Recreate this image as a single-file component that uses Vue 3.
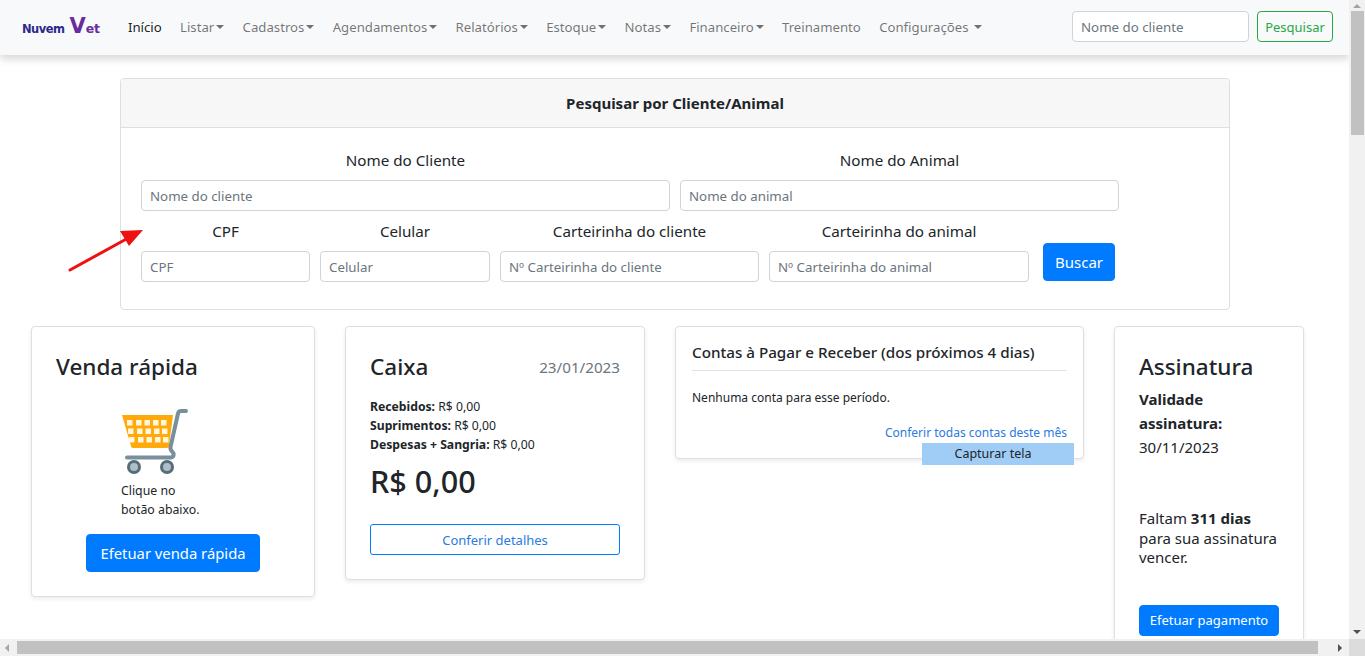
<script setup>
const navItems = [
  { label: 'Início', active: true },
  { label: 'Listar', caret: true },
  { label: 'Cadastros', caret: true },
  { label: 'Agendamentos', caret: true },
  { label: 'Relatórios', caret: true },
  { label: 'Estoque', caret: true },
  { label: 'Notas', caret: true },
  { label: 'Financeiro', caret: true },
  { label: 'Treinamento' },
  { label: 'Configurações', caret: true, spaced: true }
]

const lowerFields = [
  { label: 'CPF', placeholder: 'CPF', cls: 'w-cpf' },
  { label: 'Celular', placeholder: 'Celular', cls: 'w-cel' },
  { label: 'Carteirinha do cliente', placeholder: 'Nº Carteirinha do cliente', cls: 'w-cli' },
  { label: 'Carteirinha do animal', placeholder: 'Nº Carteirinha do animal', cls: 'w-ani' }
]

// white windows of the cart basket
const cartCols = [6, 15, 23.5, 32, 40]
const cartRows = [13, 21.5, 30]
</script>

<template>
  <div class="shell">
    <div class="middle">
      <div class="viewport">
        <nav class="navbar">
          <a class="brand"><span class="b1">Nuvem</span><span class="b2"><span class="bv">V</span>et</span></a>
          <ul class="nav">
            <li v-for="item in navItems" :key="item.label" :class="{ active: item.active }">
              {{ item.label }}<span v-if="item.spaced">&nbsp;</span><i v-if="item.caret" class="caret"></i>
            </li>
          </ul>
          <form class="nav-search" @submit.prevent>
            <input class="form-control nav-input" placeholder="Nome do cliente">
            <button class="btn-search" type="button">Pesquisar</button>
          </form>
        </nav>

        <section class="search-card">
          <header class="search-head">Pesquisar por Cliente/Animal</header>
          <div class="search-body">
            <div class="form-row">
              <div class="field w-nome">
                <label>Nome do Cliente</label>
                <input class="form-control" placeholder="Nome do cliente">
              </div>
              <div class="field w-animal">
                <label>Nome do Animal</label>
                <input class="form-control" placeholder="Nome do animal">
              </div>
            </div>
            <div class="form-row lower">
              <div v-for="f in lowerFields" :key="f.label" class="field" :class="f.cls">
                <label>{{ f.label }}</label>
                <input class="form-control" :placeholder="f.placeholder">
              </div>
              <button class="btn-primary buscar" type="button">Buscar</button>
            </div>
          </div>
        </section>

        <div class="cards">
          <div class="card venda">
            <h3>Venda rápida</h3>
            <div class="venda-center">
              <svg class="cart" width="68" height="68" viewBox="0 0 68 68">
                <path d="M1 8h51l-4 31c0 1-1 2-2 2H12c-1 0-2-1-2-2z" fill="#ffa90a" />
                <g fill="#fff6dc">
                  <template v-for="(y, r) in cartRows" :key="r">
                    <rect v-for="x in cartCols" :key="x" :x="x + r" :y="y" width="5.500" height="5.500" />
                  </template>
                </g>
                <path d="M65 4h-5c-1.500 0-2.500.5-3 2.500L49.500 40c-.5 2 .5 3.500 2 5 1.500 1.500 2 4.500-1.500 5.500H6" fill="none" stroke="#78909c" stroke-width="4" stroke-linecap="round" stroke-linejoin="round" />
                <circle cx="13" cy="60" r="5.500" fill="#b0bec5" stroke="#546e7a" stroke-width="3" />
                <circle cx="46" cy="60" r="5.500" fill="#b0bec5" stroke="#546e7a" stroke-width="3" />
              </svg>
              <p class="venda-text">Clique no<br>botão abaixo.</p>
              <button class="btn-primary venda-btn" type="button">Efetuar venda rápida</button>
            </div>
          </div>

          <div class="card caixa">
            <div class="caixa-top">
              <h3>Caixa</h3>
              <span class="caixa-date">23/01/2023</span>
            </div>
            <div class="caixa-lines">
              <div><b>Recebidos:</b> R$ 0,00</div>
              <div><b>Suprimentos:</b> R$ 0,00</div>
              <div><b>Despesas + Sangria:</b> R$ 0,00</div>
            </div>
            <div class="caixa-total">R$ 0,00</div>
            <button class="btn-outline" type="button">Conferir detalhes</button>
          </div>

          <div class="card contas">
            <h5>Contas à Pagar e Receber (dos próximos 4 dias)</h5>
            <p>Nenhuma conta para esse período.</p>
            <a class="contas-link">Conferir todas contas deste mês</a>
          </div>

          <div class="card assinatura">
            <h3>Assinatura</h3>
            <div class="validade"><b>Validade assinatura:</b><br>30/11/2023</div>
            <div class="faltam">Faltam <b>311 dias</b> para sua assinatura vencer.</div>
            <button class="btn-primary pagar" type="button">Efetuar pagamento</button>
          </div>
        </div>

        <svg class="arrow" width="84" height="50" viewBox="0 0 84 50">
          <path d="M2 47L62 14" stroke="#ee1111" stroke-width="3" stroke-linecap="round" />
          <path d="M75 7L52 8l9 15z" fill="#ee1111" />
        </svg>
        <div class="capture">Capturar tela</div>
      </div>

      <div class="vscroll">
        <span class="tri up"></span>
        <div class="vthumb"></div>
        <span class="tri down"></span>
      </div>
    </div>
    <div class="hscroll">
      <span class="tri left"></span>
      <div class="hthumb"></div>
      <span class="tri right"></span>
      <div class="corner"></div>
    </div>
  </div>
</template>

<style>
html, body {
  margin: 0;
  overflow: hidden;
}
</style>

<style scoped>
* {
  box-sizing: border-box;
}

.shell {
  width: 1365px;
  height: 656px;
  display: flex;
  flex-direction: column;
  overflow: hidden;
  font-family: 'Noto Sans', 'Liberation Sans', sans-serif;
  font-size: 15px;
  color: #212529;
  background: #fff;
}

.middle {
  flex: 1;
  display: flex;
  min-height: 0;
}

.viewport {
  position: relative;
  flex: 1;
  min-width: 0;
  overflow: hidden;
}

/* navbar */
.navbar {
  height: 55px;
  display: flex;
  align-items: center;
  padding: 0 16px 2px 22px;
  background: #f8f9fa;
  box-shadow: 0 4px 8px rgba(0, 0, 0, .16);
}

.brand {
  flex: none;
  width: 106px;
  display: flex;
  align-items: baseline;
  white-space: nowrap;
  font-family: 'DejaVu Sans', sans-serif;
  font-weight: 700;
  line-height: 1;
}

.b1 {
  font-size: 11.500px;
  color: #2b2a8c;
  letter-spacing: -.5px;
}

.b2 {
  margin-left: 5px;
  font-size: 12.500px;
  color: #6a2c9c;
  letter-spacing: -.2px;
}

.bv {
  font-size: 21px;
}

.nav {
  list-style: none;
  display: flex;
  gap: 18.300px;
  margin: 0;
  padding: 0;
  flex: 1;
  min-width: 0;
  font-size: 13.200px;
  white-space: nowrap;
  color: rgba(0, 0, 0, .55);
}

.nav .active {
  color: rgba(0, 0, 0, .9);
}

.caret {
  display: inline-block;
  margin-left: 2px;
  vertical-align: 3px;
  border-top: 4.500px solid;
  border-left: 4.500px solid transparent;
  border-right: 4.500px solid transparent;
}

.nav-search {
  flex: none;
  display: flex;
  gap: 8px;
}

.nav-search .nav-input {
  width: 177px;
  height: 31px;
}

.btn-search {
  flex: none;
  width: 76px;
  height: 31px;
  padding: 0;
  border: 1px solid #28a745;
  border-radius: 4px;
  background: transparent;
  color: #28a745;
  font: inherit;
  font-size: 13px;
}

/* form */
.form-control {
  display: block;
  height: 31px;
  width: 100%;
  padding: 0 8px;
  border: 1px solid #ced4da;
  border-radius: 4px;
  background: #fff;
  font: inherit;
  font-size: 13.300px;
  color: #495057;
}

.form-control::placeholder {
  color: #6c757d;
  opacity: 1;
}

.search-card {
  width: 1110px;
  height: 232px;
  margin: 23px 0 0 120px;
  border: 1px solid #dfdfdf;
  border-radius: 4px;
}

.search-head {
  height: 49px;
  display: flex;
  align-items: center;
  justify-content: center;
  background: #f7f7f7;
  border-bottom: 1px solid #dfdfdf;
  border-radius: 3px 3px 0 0;
  font-size: 15px;
  font-weight: 700;
}

.search-body {
  padding: 20px;
}

.form-row {
  display: flex;
  gap: 10px;
  align-items: flex-end;
}

.form-row.lower {
  margin-top: 8px;
}

.field label {
  display: block;
  text-align: center;
  margin-bottom: 8px;
  line-height: 24px;
  font-size: 15.200px;
}

.w-nome { width: 529px; }
.w-animal { width: 439px; }
.w-cpf { width: 169px; }
.w-cel { width: 170px; }
.w-cli { width: 259px; }
.w-ani { width: 260px; }

.btn-primary {
  border: 1px solid #007bff;
  border-radius: 4px;
  background: #007bff;
  color: #fff;
  font: inherit;
  padding: 0;
}

.buscar {
  width: 72px;
  height: 38px;
  margin: 0 0 1px 4px;
  font-size: 15px;
}

/* cards */
.cards {
  display: flex;
  align-items: flex-start;
  gap: 30px;
  margin: 16px 0 0 31px;
}

.card {
  flex: none;
  border: 1px solid #dfdfdf;
  border-radius: 4px;
  background: #fff;
  box-shadow: 0 2px 4px rgba(0, 0, 0, .08);
}

h3 {
  margin: 0;
  font-size: 22.500px;
  font-weight: 500;
  line-height: 28px;
}

.venda {
  width: 284px;
  height: 271px;
  padding: 26px 24px;
}

.venda-center {
  display: flex;
  flex-direction: column;
  align-items: flex-start;
}

.cart {
  margin: 26px 0 0 65px;
}

.venda-text {
  margin: 7px 0 0 65px;
  font-size: 12.300px;
  line-height: 18.500px;
}

.venda-btn {
  width: 174px;
  height: 38px;
  margin: 15px 0 0 30px;
  font-size: 14.800px;
}

.caixa {
  width: 300px;
  height: 254px;
  padding: 26px 24px;
}

.caixa-top {
  display: flex;
  justify-content: space-between;
  align-items: center;
}

.caixa-date {
  font-size: 15.200px;
  color: #6c757d;
}

.caixa-lines {
  margin-top: 16px;
  font-size: 12.200px;
  line-height: 19px;
}

.caixa-total {
  margin-top: 7px;
  font-size: 30.600px;
  font-weight: 500;
  line-height: 40px;
}

.btn-outline {
  display: block;
  width: 100%;
  height: 31px;
  margin-top: 23px;
  padding: 0;
  border: 1px solid #007bff;
  border-radius: 3px;
  background: #fff;
  color: #2a7ae2;
  font: inherit;
  font-size: 13px;
}

.contas {
  width: 409px;
  height: 133px;
  padding: 15px 16px;
  display: flex;
  flex-direction: column;
}

.contas h5 {
  margin: 0;
  padding-bottom: 7px;
  border-bottom: 1px solid #e3e3e3;
  font-size: 15.200px;
  font-weight: 500;
  line-height: 21px;
}

.contas p {
  margin: 17px 0 0;
  font-size: 12px;
  line-height: 20px;
}

.contas-link {
  align-self: flex-end;
  margin-top: 16px;
  font-size: 12px;
  line-height: 18px;
  color: #2a7ae2;
}

.assinatura {
  width: 190px;
  height: 340px;
  padding: 26px 24px;
}

.validade {
  margin-top: 6px;
  font-size: 15px;
  line-height: 24px;
}

.faltam {
  margin-top: 50px;
  font-size: 15px;
  line-height: 19.500px;
}

.pagar {
  width: 140px;
  height: 31px;
  margin-top: 37px;
  font-size: 13px;
}

/* overlays from the screenshot tool */
.arrow {
  position: absolute;
  left: 68px;
  top: 223px;
}

.capture {
  position: absolute;
  left: 922px;
  top: 443px;
  width: 152px;
  height: 22px;
  padding-right: 10px;
  line-height: 22px;
  text-align: center;
  background: #a0cdf5;
  font-size: 12.500px;
}

/* scrollbars */
.vscroll {
  flex: none;
  width: 16px;
  display: flex;
  flex-direction: column;
  align-items: center;
  background: #f1f1f1;
}

.vthumb {
  width: 13px;
  height: 124px;
  margin: 3px 0 auto 1px;
  background: #c1c1c1;
}

.hscroll {
  flex: none;
  height: 17px;
  display: flex;
  align-items: center;
  background: #f1f1f1;
}

.hthumb {
  width: 1301px;
  height: 13px;
  margin-left: 8px;
  background: #c1c1c1;
}

.tri {
  flex: none;
  width: 0;
  height: 0;
  border: 4px solid transparent;
}

.tri.up {
  margin-top: 4px;
  border-top: 0;
  border-bottom-color: #a3a3a3;
}

.tri.down {
  margin-bottom: 5px;
  border-bottom: 0;
  border-top-color: #505050;
}

.tri.left {
  margin-left: 5px;
  border-left: 0;
  border-right-color: #a3a3a3;
}

.tri.right {
  margin-left: 20px;
  border-right: 0;
  border-left-color: #505050;
}

.corner {
  width: 16px;
  margin-left: auto;
  height: 100%;
  background: #dcdcdc;
}
</style>
